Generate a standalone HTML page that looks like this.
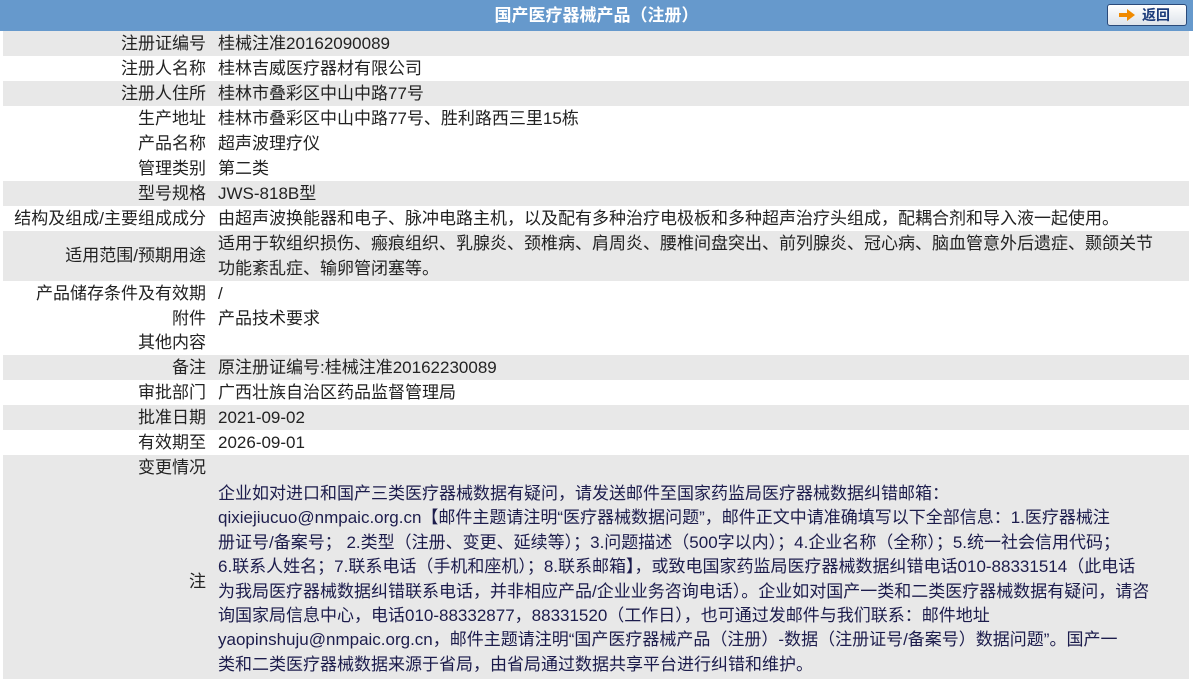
<!DOCTYPE html>
<html><head><meta charset="utf-8"><style>
*{margin:0;padding:0;box-sizing:border-box}
body{width:1193px;height:679px;overflow:hidden;background:#fff;font-family:"Liberation Sans","Noto Sans CJK SC",sans-serif;font-size:17px;color:#222}
.hd{position:absolute;left:0;top:0;width:1193px;height:31px;background:#6699cc;color:#fff;font-weight:bold;text-align:center;line-height:31px;font-size:17px}
.btn{position:absolute;left:1107px;top:4px;width:80px;height:22px;border:1px solid #2a4a7a;border-radius:3px;background:linear-gradient(#fff,#dde3ea);color:#1a3a7a;font-weight:bold;font-size:14px;line-height:20px;text-align:left}
.btn svg{position:absolute;left:10px;top:4px}
.btn span{position:absolute;left:34px;top:0}
.r{position:absolute;left:3px;width:1186px;height:25px}
.g{background:#e8e8e8}
.l{position:absolute;right:983px;white-space:nowrap;line-height:25px}
.v{position:absolute;left:215px;white-space:nowrap;line-height:25px}
.note{color:#1c1c4c;line-height:24.4px;top:27px}
</style></head><body>
<div class="hd">国产医疗器械产品（注册）</div>
<div class="btn"><svg width="18" height="12" viewBox="0 0 18 12"><path d="M1 4h8V0l8 6-8 6V8H1z" fill="#f08a00"/></svg><span>返回</span></div>

<div class="r g" style="top:31px"><div class="l">注册证编号</div><div class="v">桂械注准20162090089</div></div>
<div class="r" style="top:56px"><div class="l">注册人名称</div><div class="v">桂林吉威医疗器材有限公司</div></div>
<div class="r g" style="top:81px"><div class="l">注册人住所</div><div class="v">桂林市叠彩区中山中路77号</div></div>
<div class="r" style="top:106px"><div class="l">生产地址</div><div class="v">桂林市叠彩区中山中路77号、胜利路西三里15栋</div></div>
<div class="r" style="top:131px"><div class="l">产品名称</div><div class="v">超声波理疗仪</div></div>
<div class="r" style="top:156px"><div class="l">管理类别</div><div class="v">第二类</div></div>
<div class="r g" style="top:181px"><div class="l">型号规格</div><div class="v">JWS-818B型</div></div>
<div class="r" style="top:206px"><div class="l">结构及组成/主要组成成分</div><div class="v">由超声波换能器和电子、脉冲电路主机，以及配有多种治疗电极板和多种超声治疗头组成，配耦合剂和导入液一起使用。</div></div>
<div class="r g" style="top:231px;height:50px"><div class="l" style="top:12px">适用范围/预期用途</div><div class="v">适用于软组织损伤、瘢痕组织、乳腺炎、颈椎病、肩周炎、腰椎间盘突出、前列腺炎、冠心病、脑血管意外后遗症、颞颌关节<br>功能紊乱症、输卵管闭塞等。</div></div>
<div class="r" style="top:281px"><div class="l">产品储存条件及有效期</div><div class="v">/</div></div>
<div class="r" style="top:306px"><div class="l">附件</div><div class="v">产品技术要求</div></div>
<div class="r" style="top:330px"><div class="l">其他内容</div><div class="v"></div></div>
<div class="r g" style="top:355px"><div class="l">备注</div><div class="v">原注册证编号:桂械注准20162230089</div></div>
<div class="r" style="top:380px"><div class="l">审批部门</div><div class="v">广西壮族自治区药品监督管理局</div></div>
<div class="r g" style="top:405px"><div class="l">批准日期</div><div class="v">2021-09-02</div></div>
<div class="r" style="top:430px"><div class="l">有效期至</div><div class="v">2026-09-01</div></div>
<div class="r g" style="top:455px;height:224px"><div class="l">变更情况</div>
<div class="l" style="top:114px">注</div>
<div class="v note">企业如对进口和国产三类医疗器械数据有疑问，请发送邮件至国家药监局医疗器械数据纠错邮箱：<br>qixiejiucuo@nmpaic.org.cn【邮件主题请注明“医疗器械数据问题”，邮件正文中请准确填写以下全部信息：1.医疗器械注<br>册证号/备案号； 2.类型（注册、变更、延续等）；3.问题描述（500字以内）；4.企业名称（全称）；5.统一社会信用代码；<br>6.联系人姓名；7.联系电话（手机和座机）；8.联系邮箱】，或致电国家药监局医疗器械数据纠错电话010-88331514（此电话<br>为我局医疗器械数据纠错联系电话，并非相应产品/企业业务咨询电话）。企业如对国产一类和二类医疗器械数据有疑问，请咨<br>询国家局信息中心，电话010-88332877，88331520（工作日），也可通过发邮件与我们联系：邮件地址<br>yaopinshuju@nmpaic.org.cn，邮件主题请注明“国产医疗器械产品（注册）-数据（注册证号/备案号）数据问题”。国产一<br>类和二类医疗器械数据来源于省局，由省局通过数据共享平台进行纠错和维护。</div></div>
</body></html>
